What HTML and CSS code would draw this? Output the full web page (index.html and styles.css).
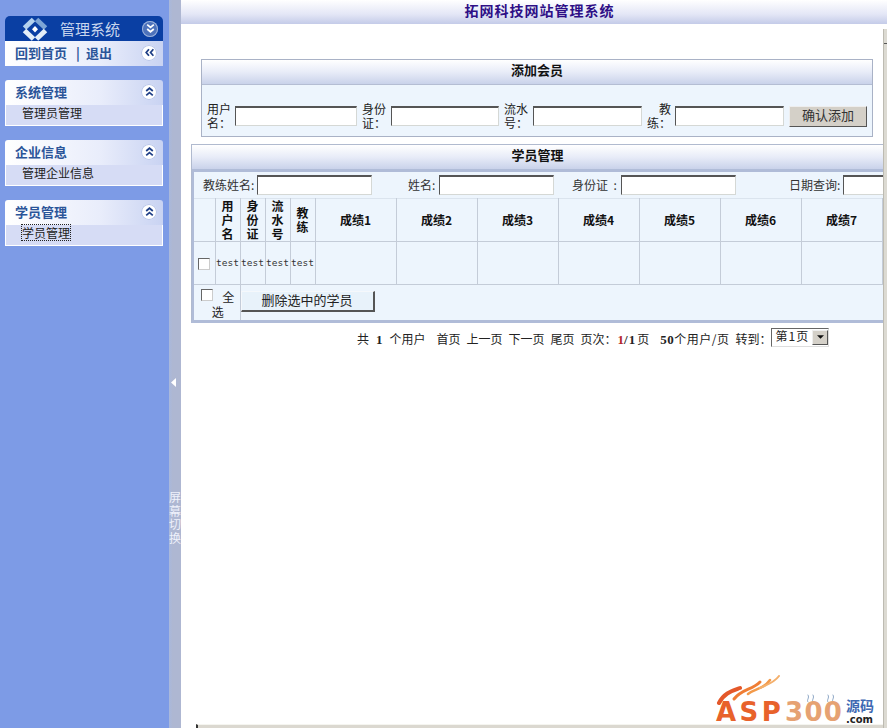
FILE: index.html
```html
<!DOCTYPE html>
<html lang="zh">
<head>
<meta charset="utf-8">
<title>拓网科技网站管理系统</title>
<link rel="stylesheet" href="styles.css">
</head>
<body>
<aside class="sidebar">
  <section class="brand">
    <div class="brand-top">
      <svg class="brand-logo" viewBox="0 0 28 26"><g fill="none" stroke-width="5"><path d="M3.500 12 12.500 3.500" stroke="#b4d2ee"/><path d="M15.500 3.500 24.500 12" stroke="#7ea6d6"/><path d="M24.500 14.500 15.500 23" stroke="#e4eef8"/><path d="M3.500 14.500 12.500 23" stroke="#e4eef8"/></g><path d="M14 10 17 13.200 14 16.400 11 13.200Z" fill="#fff"/></svg>
      <span class="brand-name">管理系统</span>
      <span class="toggle toggle-dark"><svg viewBox="0 0 10 10"><path d="M2 1.500 5 4 8 1.500M2 5.500 5 8 8 5.500"/></svg></span>
    </div>
    <div class="brand-links">
      <span class="links-text"><span>回到首页</span><span class="sep">|</span><span>退出</span></span>
      <span class="toggle"><svg viewBox="0 0 10 10"><path d="M4.500 2 2 5 4.500 8M8.500 2 6 5 8.500 8"/></svg></span>
    </div>
  </section>
  <section class="menu">
    <div class="menu-head"><span>系统管理</span><span class="toggle"><svg viewBox="0 0 10 10"><path d="M2 4.500 5 2 8 4.500M2 8.500 5 6 8 8.500"/></svg></span></div>
    <div class="menu-item">管理员管理</div>
  </section>
  <section class="menu">
    <div class="menu-head"><span>企业信息</span><span class="toggle"><svg viewBox="0 0 10 10"><path d="M2 4.500 5 2 8 4.500M2 8.500 5 6 8 8.500"/></svg></span></div>
    <div class="menu-item">管理企业信息</div>
  </section>
  <section class="menu">
    <div class="menu-head"><span>学员管理</span><span class="toggle"><svg viewBox="0 0 10 10"><path d="M2 4.500 5 2 8 4.500M2 8.500 5 6 8 8.500"/></svg></span></div>
    <div class="menu-item"><span class="focused">学员管理</span></div>
  </section>
</aside>
<div class="splitter">
  <svg class="split-arrow" viewBox="0 0 5 9"><path d="M5 0V9L0 4.500Z"/></svg>
  <div class="split-label">屏幕切换</div>
</div>
<main class="main">
  <header class="topbar">拓网科技网站管理系统</header>
  <div class="content">
    <section class="add-panel">
      <h2 class="panel-title">添加会员</h2>
      <form class="add-form">
        <label class="add-label add-a">用户名：</label><input class="field f-122" type="text">
        <label class="add-label add-b">身份证：</label><input class="field f-108" type="text">
        <label class="add-label add-b">流水号：</label><input class="field f-109" type="text">
        <label class="add-label add-c">教练：</label><input class="field f-109" type="text">
        <button class="submit" type="button">确认添加</button>
      </form>
    </section>
    <section class="list-panel">
      <h2 class="panel-title list-title">学员管理</h2>
      <div class="list-inner">
        <div class="search">
          <span class="s-a">教练姓名:</span><input class="field f-116" type="text">
          <span class="s-b">姓名:</span><input class="field f-116" type="text">
          <span class="s-c">身份证 &nbsp;:</span><input class="field f-116" type="text">
          <span class="s-d">日期查询:</span><input class="field f-116" type="text">
        </div>
        <table class="grid">
          <colgroup><col class="c0"><col class="c1"><col class="c1"><col class="c1"><col class="c1"><col class="c2"><col class="c2"><col class="c2"><col class="c2"><col class="c2"><col class="c2"><col class="c2"></colgroup>
          <tr class="r-head"><th></th><th class="narrow">用户名</th><th class="narrow">身份证</th><th class="narrow">流水号</th><th class="narrow">教练</th><th>成绩1</th><th>成绩2</th><th>成绩3</th><th>成绩4</th><th>成绩5</th><th>成绩6</th><th>成绩7</th></tr>
          <tr class="r-body"><td class="cb"><span class="check"></span></td><td class="mono">test</td><td class="mono">test</td><td class="mono">test</td><td class="mono">test</td><td></td><td></td><td></td><td></td><td></td><td></td><td></td></tr>
          <tr class="r-foot"><td class="all" colspan="2"><span class="check check-all"></span>全选</td><td colspan="10" class="foot"><button class="del" type="button">删除选中的学员</button></td></tr>
        </table>
      </div>
    </section>
    <div class="pager">
      <span>共<b class="n">1</b>个用户</span><span class="g1">首页</span><span>上一页</span><span>下一页</span><span>尾页</span>
      <span>页次：<b class="red">1</b><b class="total">/1</b>页</span><span class="g1 per-page"><b class="fifty">50</b>个用户/页</span><span>转到：</span>
      <span class="select"><span class="select-val">第1页</span><span class="select-btn"><svg viewBox="0 0 8 4"><path d="M0 0H8L4 4Z"/></svg></span></span>
    </div>
  </div>
  <div class="vscroll"><span class="vthumb"></span></div>
  <div class="hscroll"></div>
  <div class="watermark">
    <svg class="flames" viewBox="0 0 130 30"><g fill="none" stroke-linecap="round"><path d="M3 28C8 18 16 16 24 13" stroke="#e4582a" stroke-width="4"/><path d="M18 24C26 14 36 15 44 7" stroke="#ef7d34" stroke-width="3"/><path d="M32 19C40 13 48 14 54 5" stroke="#f39a4a" stroke-width="2.500"/><path d="M44 13C50 10 58 8 63 1" stroke="#f4b06c" stroke-width="2"/><path d="M92 27C90 25 94 23 92 20M97 27C95 25 99 23 97 20M112 27C110 25 114 23 112 20M117 27C115 25 119 23 117 20" stroke="#8aa4c4" stroke-width="1"/></g></svg>
    <span class="wm-asp">ASP</span><span class="wm-num">300</span>
    <span class="wm-side"><span class="wm-cn">源码</span><span class="wm-com">.com</span></span>
  </div>
</main>
</body>
</html>
```
FILE: styles.css
```css
* { box-sizing: border-box; }
html, body { margin: 0; height: 100%; }
body {
  display: grid;
  grid-template-columns: 169px 12px 1fr;
  height: 728px;
  overflow: hidden;
  font: 12px/14px "Noto Sans CJK SC", "Liberation Sans", sans-serif;
  color: #222;
  background: #fff;
}
.sidebar { background: #7d9be6; padding: 16px 6px 0 5px; display: flex; flex-direction: column; gap: 14px; }
.brand-top {
  height: 25px; display: flex; align-items: center; padding: 0 4px 0 16px;
  background: #0a3fa3; border-radius: 5px 5px 0 0;
}
.brand-logo { width: 28px; height: 26px; }
.brand-name { margin-left: 11px; font-size: 15px; color: #c8d6ee; flex: 1; }
.brand-links, .menu-head {
  height: 25px; display: flex; align-items: center; justify-content: space-between; padding: 0 6px 2px 10px;
  background: linear-gradient(90deg, #fff, #e9edfb 60%, #c9d3f2);
  font-weight: 700; font-size: 13px; color: #2b5599;
}
.links-text { display: flex; }
.sep { margin: 0 6px 0 9px; }
.menu-head { border-radius: 3px 3px 0 0; }
.toggle {
  width: 16px; height: 16px; border-radius: 50%; background: #fff; display: flex; align-items: center; justify-content: center;
  box-shadow: 0 0 0 1px #b9c6ea inset; flex: none;
}
.toggle svg { width: 11px; height: 11px; fill: none; stroke: #1f3f86; stroke-width: 1.600; }
.toggle-dark { background: #4d72bb; box-shadow: 0 0 0 1px #9cb3dc inset; margin-right: 1px; }
.toggle-dark svg { stroke: #fff; }
.menu-item {
  height: 21px; padding: 0 0 0 16px; line-height: 15px; font-size: 12px; color: #222;
  background: #d6dcf5; border: 1px solid #fff; border-top: 0;
}
.focused { display: inline-block; outline: 1px dotted #222; outline-offset: 0; line-height: 15px; }
.splitter {
  background: linear-gradient(90deg, #a8b8dc, #aeb7d2 30%); color: #fff;
  display: flex; flex-direction: column; align-items: center;
}
.split-arrow { width: 5px; height: 9px; margin: 378px 3px 0 0; fill: #fff; }
.split-label { margin-top: 103px; width: 12px; font-size: 12px; line-height: 13.500px; text-align: center; color: #eef1fb; }
.main { position: relative; overflow: hidden; min-width: 0; }
.topbar {
  height: 24px; padding-left: 11px; text-align: center; font-weight: 700; font-size: 14px; letter-spacing: 1px; line-height: 20px; color: #2e0f86;
  background: linear-gradient(#fff, #e3e6f6 60%, #c4cbe8);
}
.content { padding: 35px 0 0 10px; }
.add-panel { margin-left: 10px; width: 672px; height: 78px; border: 1px solid #a9b2c6; background: #edf5fd; }
.panel-title {
  margin: 0; height: 25px; font-size: 13px; font-weight: 700; line-height: 20px; text-align: center; color: #111;
  background: linear-gradient(#fff, #e8ecf8 50%, #c9d2ea); border-bottom: 1px solid #b4bdd3;
}
.add-form { display: flex; align-items: center; padding: 17px 0 0 5px; }
.add-label { line-height: 14px; font-size: 12px; text-align: left; }
.add-a { width: 28px; }
.add-b { width: 29px; margin-left: 5px; }
.add-c { width: 24px; margin: 0 4px 0 5px; text-align: right; }
.field {
  height: 20px; padding: 0; margin: 0; background: #fff; flex: none;
  border: 1px solid; border-color: #555 #d5d8d5 #d5d8d5 #555; border-width: 2px 1px 1px 1px; font: inherit;
}
.f-122 { width: 122px; }
.f-108 { width: 108px; }
.f-109 { width: 109px; }
.f-116 { width: 115px; }
.submit {
  margin-left: 5px; width: 78px; height: 21px; padding: 0 0 3px; background: #d4d0c8; font: inherit; font-size: 13px; color: #333;
  border: 1px solid; border-color: #eee #555 #555 #eee;
}
.list-panel { margin-top: 7px; width: 692px; border: 1px solid #b0bacf; border-width: 1px 0 3px 1px; border-bottom-color: #b0bcd8; background: #edf5fd; }
.list-title { border-bottom: 3px solid #b0bcd8; height: 27px; line-height: 19px; }
.list-inner { border-left: 2px solid #b0bcd8; }
.search { height: 26px; display: flex; align-items: center; white-space: nowrap; padding-left: 9px; color: #333; }
.s-a { width: 54px; flex: none; }
.s-b { width: 31px; margin-left: 36px; flex: none; }
.s-c { width: 49px; margin-left: 18px; flex: none; }
.s-d { width: 54px; margin-left: 53px; flex: none; }
.grid { border-collapse: collapse; table-layout: fixed; width: 688px; }
.c0 { width: 21px; }
.c1 { width: 25px; }
.c2 { width: 81px; }
.grid th, .grid td { border: 1px solid #c4ccd8; padding: 0; text-align: center; font-weight: 400; }
.grid tr > :first-child { border-left: 0; }
.grid tr:first-child > * { border-top-color: #dbe4ee; }
.grid th { font-weight: 700; font-size: 12px; line-height: 14px; color: #111; }
.grid th.narrow { padding: 0 4px; }
.r-head { height: 43px; }
.r-body { height: 43px; }
.r-foot { height: 35px; }
.grid .r-foot td { border-bottom: 0; }
.grid .foot { text-align: left; border-right: 0; vertical-align: top; }
.mono { font: 9.500px/14px "DejaVu Sans Mono", monospace; color: #333; }
.grid .all { line-height: 15px; font-size: 12px; vertical-align: top; padding: 4px 5px 0 7px; }
.check { display: inline-block; width: 12px; height: 12px; background: #fff; border: 1px solid; border-color: #666 #ccc #ccc #666; vertical-align: middle; }
.check-all { vertical-align: top; margin-right: 9px; }
.del {
  display: block; margin-top: 6px; width: 134px; height: 21px; padding: 0 0 2px; background: #e8f2fa; font: inherit; font-size: 13px; color: #222;
  border: 1px solid; border-color: #f5f8fb #555 #555 #f5f8fb; border-width: 1px 2px 2px 1px;
}
.pager { display: flex; align-items: center; gap: 6px; padding: 7px 0 0 166px; white-space: nowrap; color: #222; height: 26px; }
.pager .g1 { margin-left: 5px; }
.pager .per-page { letter-spacing: 0.500px; }
.pager b { font-family: "Liberation Serif", serif; font-size: 13px; }
.n { margin: 0 7px; }
.red { color: #b3262a; margin-left: 1px; }
.total { letter-spacing: 1px; margin-right: 1px; }
.select {
  display: flex; width: 58px; height: 19px; background: #fff; margin: -4px 0 0 -6px;
  border: 1px solid; border-color: #666 #ddd #ddd #666;
}
.select-val { flex: 1; padding-left: 3px; line-height: 14px; letter-spacing: 1px; }
.select-btn { width: 16px; height: 15px; margin-top: 1px; background: #d4d0c8; border: 1px solid; border-color: #eee #555 #555 #eee; display: flex; align-items: center; justify-content: center; }
.select-btn svg { width: 7px; height: 4px; fill: #111; }
.vscroll { position: absolute; right: 0; top: 29px; bottom: 0; width: 4px; background: #dcdad2; border-left: 1px solid #bdbbb2; }
.vthumb { display: block; height: 15px; border-bottom: 1px solid #555; }
.hscroll { position: absolute; left: 15px; right: 4px; bottom: 0; height: 4px; background: #dbd8d0; border-top: 1px solid #f5f5f0; border-left: 2px solid #333; }
.watermark { position: absolute; right: 0; bottom: 0; width: 171px; height: 53px; display: flex; align-items: flex-end; padding-bottom: 5px; }
.flames { position: absolute; left: 0; top: 0; width: 130px; height: 30px; }
.wm-asp, .wm-num { font: 700 26px/21px "DejaVu Sans", sans-serif; position: relative; }
.wm-asp { width: 69px; flex: none; letter-spacing: 3.500px; color: #e8622b; }
.wm-num { width: 58px; flex: none; letter-spacing: 1.300px; color: #e6a273; }
.wm-side { display: flex; flex-direction: column; margin: 0 0 -2px 3px; width: 30px; position: relative; }
.wm-cn { font-size: 14px; font-weight: 700; line-height: 16px; color: #3f6ab3; margin-bottom: 2px; }
.wm-com { font: 700 10px/10px "DejaVu Sans", sans-serif; color: #222; }
```
